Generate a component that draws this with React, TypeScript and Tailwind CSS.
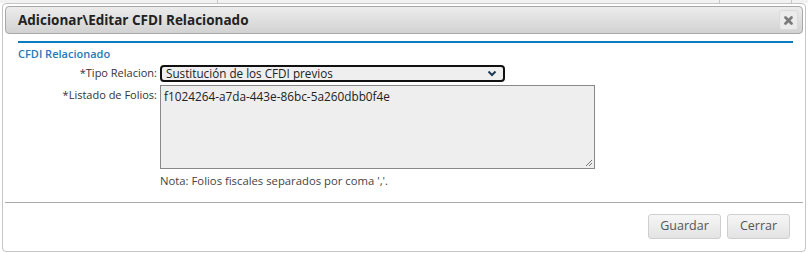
import React from 'react';

const App: React.FC = () => {
  return (
    <div className="w-[808px] h-[253px] bg-white overflow-hidden font-['Open_Sans',sans-serif] text-[#333]">
      {/* page behind the dialog */}
      <div className="h-[3px] bg-[#f2f2f2] flex">
        <div className="w-[218px] border-r border-[#c8c8c8]" />
        <div className="w-[502px] border-r border-[#c8c8c8]" />
        <div className="w-[72px] border-r border-[#c8c8c8]" />
      </div>

      {/* dialog */}
      <div className="mx-[2px] h-[249px] border border-[#c5c5c5] rounded-[4px] bg-white p-[2px] flex flex-col">
        {/* title bar */}
        <div className="h-[28px] flex items-center justify-between border border-[#a8a8a8] rounded-[4px] bg-gradient-to-b from-[#ececec] to-[#d2d2d2] pl-[12px] pr-[4px]">
          <span className="text-[13.5px] font-bold text-[#222]">Adicionar\Editar CFDI Relacionado</span>
          <button className="w-[19px] h-[20px] rounded-[3px] bg-[#ebebeb] border border-[#dadada] flex items-center justify-center">
            <svg width="11" height="11" viewBox="0 0 11 11">
              <path d="M2.5 2.5 L8.5 8.5 M8.5 2.5 L2.5 8.5" stroke="#7a7a7a" strokeWidth="2.8" strokeLinecap="round" />
            </svg>
          </button>
        </div>

        {/* body */}
        <div className="pl-[13px] pr-[10px] pt-[7px]">
          <div className="border-t-2 border-[#0b7cbf]" />
          <div className="pt-[3px] text-[11px] font-semibold text-[#2a78b8] leading-[16px]">CFDI Relacionado</div>

          <div className="mt-[3px] flex items-center text-[11px]">
            <label className="w-[142px] text-right pr-[3px] text-[#333]">*Tipo Relacion:</label>
            <div className="w-[345px] h-[17px] border-2 border-[#111] rounded-[4px] bg-[#efefef] flex items-center justify-between pl-[4px] pr-[6px]">
              <span className="text-[11.7px] text-[#222] leading-none">Sustitución de los CFDI previos</span>
              <svg width="10" height="7" viewBox="0 0 10 7">
                <path d="M1.5 1.5 L5 5 L8.5 1.5" stroke="#1d3b55" strokeWidth="2" fill="none" />
              </svg>
            </div>
          </div>

          <div className="mt-[3px] flex items-start text-[11px]">
            <label className="w-[142px] text-right pr-[3px] pt-[2px] text-[#333]">*Listado de Folios:</label>
            <div className="relative w-[435px] h-[84px] border border-[#888] bg-[#eeeeee] pl-[3px] pt-[2px] text-[11.8px] text-[#222]">
              f1024264-a7da-443e-86bc-5a260dbb0f4e
              <svg className="absolute right-[1px] bottom-[1px]" width="8" height="8" viewBox="0 0 8 8">
                <path d="M7 1 L1 7 M7 4 L4 7" stroke="#777" strokeWidth="1" />
              </svg>
            </div>
          </div>

          <div className="ml-[142px] mt-[4px] text-[11.3px] text-[#444]">Nota: Folios fiscales separados por coma ','.</div>
        </div>

        {/* footer */}
        <div className="mt-auto border-t border-[#aaa] h-[47px] flex items-center justify-end gap-[6px] pr-[13px]">
          <button className="w-[73px] h-[25px] rounded-[3px] border border-[#cfcfcf] bg-gradient-to-b from-[#f6f6f6] to-[#e3e3e3] text-[12.5px] text-[#555]">Guardar</button>
          <button className="w-[63px] h-[25px] rounded-[3px] border border-[#cfcfcf] bg-gradient-to-b from-[#f6f6f6] to-[#e3e3e3] text-[12.5px] text-[#555]">Cerrar</button>
        </div>
      </div>
    </div>
  );
};

export default App;
